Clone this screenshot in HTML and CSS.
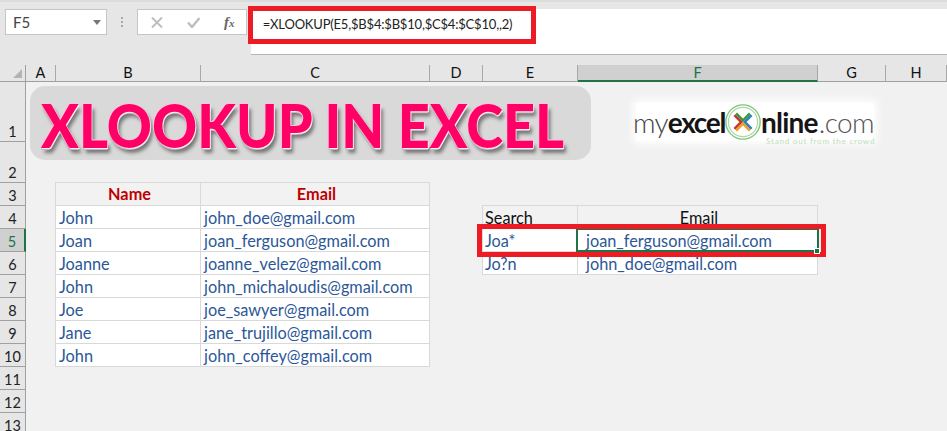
FILE: index.html
```html
<!DOCTYPE html>
<html lang="en">
<head>
<meta charset="utf-8">
<title>XLOOKUP in Excel</title>
<link rel="stylesheet" href="styles.css">
</head>
<body>
<div class="app">
  <div class="formula-row">
    <div class="name-box"><span>F5</span><i class="caret"></i></div>
    <div class="dots"><i></i><i></i><i></i></div>
    <div class="fx-box">
      <svg class="fx-icon" width="12" height="11" viewBox="0 0 12 11"><path d="M1 .5 L11 10.5 M11 .5 L1 10.5" stroke="#bdbdbd" stroke-width="2" fill="none"/></svg>
      <svg class="fx-icon" width="13" height="11" viewBox="0 0 13 11"><path d="M1 5.5 L5 10 L12.5 1" stroke="#bdbdbd" stroke-width="2.4" fill="none"/></svg>
      <span class="fx-label">f<small>x</small></span>
    </div>
    <div class="formula-input">=XLOOKUP(E5,$B$4:$B$10,$C$4:$C$10,,2)</div>
    <div class="red-box formula-mark"></div>
  </div>
  <div class="sheet">
    <div class="corner"><i></i></div>
    <div class="ch">A</div><div class="ch">B</div><div class="ch">C</div><div class="ch">D</div><div class="ch">E</div><div class="ch sel">F</div><div class="ch">G</div><div class="ch">H</div>

    <div class="rh">1</div><div class="c"></div><div class="c"></div><div class="c"></div><div class="c"></div><div class="c"></div><div class="c"></div><div class="c"></div><div class="c"></div>
    <div class="rh">2</div><div class="c"></div><div class="c"></div><div class="c"></div><div class="c"></div><div class="c"></div><div class="c"></div><div class="c"></div><div class="c"></div>

    <div class="rh">3</div><div class="c"></div><div class="c t th edge">Name</div><div class="c t th">Email</div><div class="c"></div><div class="c"></div><div class="c"></div><div class="c"></div><div class="c"></div>
    <div class="rh">4</div><div class="c"></div><div class="c t edge">John</div><div class="c t">john_doe@gmail.com</div><div class="c"></div><div class="c t t2 edge dark">Search</div><div class="c t dark mid">Email</div><div class="c"></div><div class="c"></div>
    <div class="rh sel">5</div><div class="c"></div><div class="c t edge">Joan</div><div class="c t">joan_ferguson@gmail.com</div><div class="c"></div><div class="c t t2 edge">Joa*</div><div class="c t pad active">joan_ferguson@gmail.com<i class="handle"></i></div><div class="c"></div><div class="c"></div>
    <div class="rh">6</div><div class="c"></div><div class="c t edge">Joanne</div><div class="c t">joanne_velez@gmail.com</div><div class="c"></div><div class="c t t2 edge">Jo?n</div><div class="c t pad">john_doe@gmail.com</div><div class="c"></div><div class="c"></div>
    <div class="rh">7</div><div class="c"></div><div class="c t edge">John</div><div class="c t">john_michaloudis@gmail.com</div><div class="c"></div><div class="c"></div><div class="c"></div><div class="c"></div><div class="c"></div>
    <div class="rh">8</div><div class="c"></div><div class="c t edge">Joe</div><div class="c t">joe_sawyer@gmail.com</div><div class="c"></div><div class="c"></div><div class="c"></div><div class="c"></div><div class="c"></div>
    <div class="rh">9</div><div class="c"></div><div class="c t edge">Jane</div><div class="c t">jane_trujillo@gmail.com</div><div class="c"></div><div class="c"></div><div class="c"></div><div class="c"></div><div class="c"></div>
    <div class="rh">10</div><div class="c"></div><div class="c t edge">John</div><div class="c t">john_coffey@gmail.com</div><div class="c"></div><div class="c"></div><div class="c"></div><div class="c"></div><div class="c"></div>
    <div class="rh">11</div><div class="c"></div><div class="c"></div><div class="c"></div><div class="c"></div><div class="c"></div><div class="c"></div><div class="c"></div><div class="c"></div>
    <div class="rh">12</div><div class="c"></div><div class="c"></div><div class="c"></div><div class="c"></div><div class="c"></div><div class="c"></div><div class="c"></div><div class="c"></div>
    <div class="rh">13</div><div class="c"></div><div class="c"></div><div class="c"></div><div class="c"></div><div class="c"></div><div class="c"></div><div class="c"></div><div class="c"></div>

    <div class="banner"><span class="banner-text">XLOOKUP IN EXCEL</span></div>

    <div class="logo">
      <span class="lt my">my</span><span class="bd ex">excel</span>
      <svg class="logo-mark" width="36" height="36" viewBox="0 0 42 42">
        <circle cx="21" cy="21" r="20" fill="none" stroke="#7fc27a" stroke-width="1.6"/>
        <circle cx="21" cy="21" r="17" fill="none" stroke="#a8d8a2" stroke-width="1.4"/>
        <path d="M13 11 L21 19 L29 11" stroke="#3c9a3c" stroke-width="3" fill="none"/>
        <path d="M11 13 L19 21 L11 29" stroke="#c0392b" stroke-width="3" fill="none"/>
        <path d="M31 13 L23 21 L31 29" stroke="#2f7fc1" stroke-width="3" fill="none"/>
        <path d="M13 31 L21 23 L29 31" stroke="#f0a020" stroke-width="3" fill="none"/>
      </svg>
      <span class="bd nl">nline</span><span class="lt com">.com</span>
      <span class="tag">Stand out from the crowd</span>
    </div>

    <div class="red-box row-mark"></div>
  </div>
</div>
</body>
</html>
```
FILE: styles.css
```css
* { box-sizing: border-box; }
html, body { margin: 0; height: 100%; overflow: hidden; }
body { background: #f1f1f1; font-family: Lato, "Liberation Sans", sans-serif; }
.app { width: 947px; height: 431px; overflow: hidden; }

.formula-row {
  position: relative;
  height: 65px;
  background: #e6e6e6;
  border-top: 2px solid #dcdcdc;
  padding: 7px 0 0 5px;
  display: flex;
  align-items: flex-start;
}
.name-box, .fx-box {
  height: 26px;
  background: #fff;
  border: 1px solid #c6c6c6;
  display: flex;
  align-items: center;
}
.name-box { width: 102px; padding: 0 5px 0 7px; justify-content: space-between; color: #444; font-size: 15px; }
.caret { width: 0; height: 0; border: 4px solid transparent; border-top: 5px solid #777; border-bottom: 0; }
.dots { width: 30px; height: 26px; display: flex; flex-direction: column; align-items: center; justify-content: center; gap: 2px; }
.dots i { width: 2px; height: 2px; background: #a8a8a8; }
.fx-box { width: 110px; padding-left: 13px; gap: 24px; }
.fx-label { font: italic bold 15px "Liberation Serif", serif; color: #666; }
.fx-label small { font-size: 11px; }
.formula-input {
  margin-left: 4px;
  width: 697px;
  height: 46px;
  background: #fff;
  border-bottom: 1px solid #b5b5b5;
  padding: 5px 0 0 12px;
  font-size: 13px;
  letter-spacing: -.19px;
  line-height: 20px;
  color: #222;
}
.red-box { position: absolute; border: 5px solid #ed1c24; pointer-events: none; }
.formula-mark { left: 248px; top: 4px; width: 288px; height: 38px; }

.sheet {
  position: relative;
  display: grid;
  grid-template-columns: 26px 30px 145px 229px 53px 95px 240px 68px 61px;
  grid-template-rows: 17px 60px 41px repeat(11, 23px);
}
.corner { background: #e6e6e6; border-right: 1px solid #a0a0a0; border-bottom: 1px solid #a0a0a0; position: relative; }
.corner i { position: absolute; right: 3px; bottom: 3px; width: 0; height: 0; border-style: solid; border-width: 0 0 9px 9px; border-color: transparent transparent #b4b4b4 transparent; }
.ch {
  background: #e6e6e6;
  border-right: 1px solid #a8a8a8;
  border-bottom: 1px solid #a0a0a0;
  text-align: center;
  font-size: 14.5px;
  line-height: 16px;
  color: #111;
}
.ch.sel { background: #d0d0d0; color: #217346; border-bottom: 2px solid #217346; }
.rh {
  background: #e6e6e6;
  border-right: 1px solid #a0a0a0;
  border-bottom: 1px solid #a0a0a0;
  display: flex;
  align-items: flex-end;
  justify-content: center;
  font-size: 14.5px;
  line-height: 18px;
  color: #222;
}
.rh.sel { background: #d0d0d0; color: #217346; border-right: 2px solid #217346; }
.c { font-size: 16.3px; line-height: 23px; color: #2b5797; white-space: nowrap; }
.t { background: #fff; border: 1px solid #d9d9d9; border-width: 0 1px 1px 0; padding-left: 3px; }
.t2 { padding-left: 2px; }
.edge { box-shadow: -1px 0 0 #d9d9d9; }
.th { background: #f2f2f2; color: #c00000; font-weight: 700; text-align: center; line-height: 22px; box-shadow: 0 -1px 0 #d9d9d9; }
.th.edge { box-shadow: -1px 0 0 #d9d9d9, 0 -1px 0 #d9d9d9, -1px -1px 0 #d9d9d9; }
.dark { background: #f2f2f2; color: #111; box-shadow: 0 -1px 0 #d9d9d9; }
.dark.edge { box-shadow: -1px 0 0 #d9d9d9, 0 -1px 0 #d9d9d9, -1px -1px 0 #d9d9d9; }
.mid { text-align: center; }
.pad { padding-left: 8px; }
.active { position: relative; }
.active::after { content: ""; position: absolute; left: -2px; top: -1px; right: -2px; bottom: -1px; border: 2px solid #217346; }
.handle { position: absolute; right: -3px; bottom: -3px; width: 6px; height: 6px; background: #217346; border: 1px solid #fff; z-index: 1; }

.banner {
  position: absolute;
  left: 30px; top: 21px;
  width: 561px; height: 74px;
  border-radius: 15px;
  background: #d9d9d9;
  padding-left: 11px;
  overflow: hidden;
}
.banner-text {
  display: inline-block;
  transform: scaleX(.93);
  transform-origin: left center;
  font-size: 60px;
  font-weight: 900;
  line-height: 78px;
  color: #ff0066;
  white-space: nowrap;
  text-shadow: -1px -1px 0 #ffc4da, 1px 1px 0 #f6eef0, 0 2px 0 #c9b5bc, 3px 5px 4px #777;
}
.logo {
  position: absolute;
  left: 636px; top: 38px;
  width: 238px; height: 38px;
  background: #fff;
  box-shadow: 0 0 9px 3px #fff;
  display: flex;
  align-items: center;
  font-size: 28px;
  line-height: 22px;
  letter-spacing: -.8px;
  color: #333;
  white-space: nowrap;
}
.lt { font-weight: 300; }
.my { margin-left: -3px; color: #444; }
.bd { font-weight: 700; color: #151515; }
.ex { letter-spacing: -1.3px; }
.logo-mark { margin: 0; flex: none; }
.nl { letter-spacing: -.8px; }
.com { letter-spacing: -.6px; color: #555; margin-left: 1px; }
.tag { position: absolute; left: 130px; bottom: -5px; font-size: 8px; letter-spacing: .8px; line-height: 9px; color: #bfe0ba; font-weight: 400; }

.row-mark { left: 477px; top: 159px; width: 349px; height: 33px; }
```
